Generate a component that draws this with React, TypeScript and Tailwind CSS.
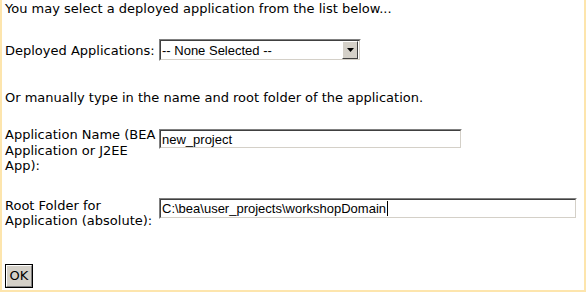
import React from "react";

const Inset = ({ width, height, children }: { width: number; height: number; children: React.ReactNode }) => (
  <div
    className="border border-t-[#808080] border-l-[#808080] border-b-[#ffffff] border-r-[#ffffff] box-border"
    style={{ width, height }}
  >
    <div className="w-full h-full border border-t-[#404040] border-l-[#404040] border-b-[#d4d0c8] border-r-[#d4d0c8] bg-white box-border flex items-center overflow-hidden">
      {children}
    </div>
  </div>
);

export default function App() {
  const label = "font-['DejaVu_Sans',Verdana,sans-serif] text-[13px] text-black";
  const field = "font-['Liberation_Sans',Arial,sans-serif] text-[13px] text-black leading-[15px]";
  return (
    <div className="w-[586px] h-[292px] bg-white border-l-2 border-r-2 border-b-2 border-[#fde5ad] box-border pl-[3px] flex flex-col">
      <div className={`${label} leading-[15px] mt-[1px]`}>You may select a deployed application from the list below...</div>

      <div className="flex items-center mt-[23px]">
        <div className={`${label} w-[154px] leading-[15px]`}>Deployed Applications:</div>
        <Inset width={202} height={22}>
          <div className={`${field} flex-1 pl-[1px]`}>-- None Selected --</div>
          <div className="w-[16px] h-[18px] mr-[1px] bg-[#d4d0c8] border border-t-[#ffffff] border-l-[#ffffff] border-b-[#404040] border-r-[#404040] box-border flex items-center justify-center">
            <svg width="7" height="4" viewBox="0 0 7 4">
              <path d="M0 0H7L3.5 4Z" fill="#000" />
            </svg>
          </div>
        </Inset>
      </div>

      <div className={`${label} leading-[15px] mt-[29px]`}>Or manually type in the name and root folder of the application.</div>

      <div className="flex items-start mt-[22px]">
        <div className={`${label} w-[154px] leading-[15.5px] pr-[1px]`}>Application Name (BEA Application or J2EE App):</div>
        <div className="mt-[2px]">
          <Inset width={303} height={20}>
            <div className={`${field} pl-[1px]`}>new_project</div>
          </Inset>
        </div>
      </div>

      <div className="flex items-start mt-[24px]">
        <div className={`${label} w-[154px] leading-[15.5px] pr-[4px]`}>Root Folder for Application (absolute):</div>
        <div>
          <Inset width={418} height={21}>
            <div className={`${field} pl-[1px] flex items-center`}>
              C:\bea\user_projects\workshopDomain
              <span className="inline-block w-[1px] h-[15px] bg-black ml-[1px]" />
            </div>
          </Inset>
        </div>
      </div>

      <div className="mt-[35px]">
        <button className="w-[28px] h-[24px] border border-black box-border p-0 bg-[#d4d0c8] block">
          <div className="w-full h-full border border-t-[#ffffff] border-l-[#ffffff] border-b-[#808080] border-r-[#808080] box-border flex items-center justify-center font-['DejaVu_Sans',Verdana,sans-serif] text-[13px] text-black leading-none">
            OK
          </div>
        </button>
      </div>
    </div>
  );
}
